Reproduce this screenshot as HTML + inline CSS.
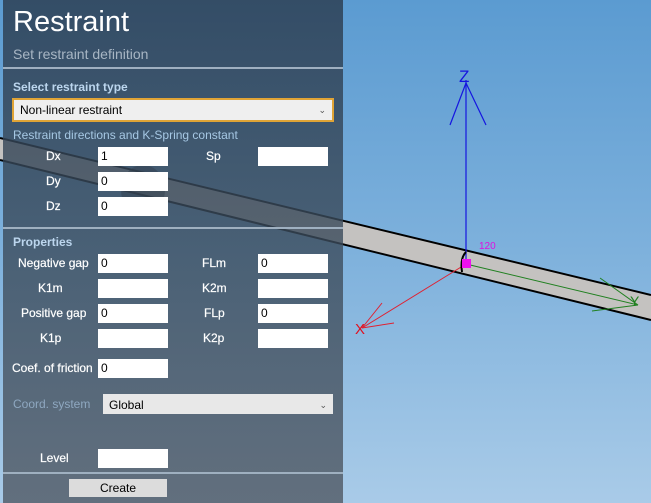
<!DOCTYPE html>
<html><head><style>
*{margin:0;padding:0;box-sizing:border-box}
body{width:651px;height:503px;overflow:hidden;position:relative;font-family:"Liberation Sans",sans-serif;background:linear-gradient(180deg,#5b9bd1 0%,#7eb1dc 50%,#a9cbe8 100%)}
svg{position:absolute;left:0;top:0}
#panel{position:absolute;left:3px;top:0;width:340px;height:503px;background:linear-gradient(180deg,rgba(44,62,82,0.84) 0%,rgba(60,76,92,0.8) 50%,rgba(86,96,108,0.86) 100%)}
.a{position:absolute;font-size:12px;color:#fff;-webkit-text-stroke:0.2px #fff}
.in{position:absolute;width:70px;height:19px;background:#fff;font-size:12px;color:#000;padding:2px 3px;line-height:15px}
.sep{position:absolute;left:0;width:340px;height:2px;background:#9fb0c0}
.sel{position:absolute;background:#efefef;font-size:12px;color:#000;padding-left:6px}
.sel span{position:absolute;right:6px;top:0;font-size:9px;color:#555}
</style></head><body>
<svg width="651" height="503">
<polygon points="0,138 651,295 651,320 0,160" fill="#c4c2c0" stroke="none"/>
<line x1="0" y1="138" x2="651" y2="295" stroke="#000" stroke-width="2"/>
<line x1="0" y1="160" x2="651" y2="320" stroke="#000" stroke-width="2"/>
<ellipse cx="143" cy="190" rx="22" ry="25" fill="#1a1a1a" opacity="0.5"/>
<line x1="466" y1="80" x2="466" y2="262" stroke="#1515e0" stroke-width="1.2"/>
<line x1="466" y1="83" x2="450" y2="125" stroke="#1515e0" stroke-width="1.2"/>
<line x1="466" y1="83" x2="486" y2="125" stroke="#1515e0" stroke-width="1.2"/>
<text x="459" y="82" font-family="Liberation Sans" font-size="17" fill="#1515e0">Z</text>
<line x1="466" y1="264" x2="362" y2="328" stroke="#e02030" stroke-width="1"/>
<line x1="362" y1="328" x2="382" y2="303" stroke="#e02030"/>
<line x1="362" y1="328" x2="394" y2="323" stroke="#e02030"/>
<text x="355" y="334" font-family="Liberation Sans" font-size="15" fill="#e01020">X</text>
<line x1="466" y1="264" x2="638" y2="305" stroke="#208020" stroke-width="1"/>
<line x1="638" y1="305" x2="600" y2="278" stroke="#208020"/>
<line x1="638" y1="305" x2="592" y2="311" stroke="#208020"/>
<text x="630" y="306" font-family="Liberation Sans" font-size="14" fill="#208020">Y</text>
<path d="M466 252 Q460 258 462 272" stroke="#000" stroke-width="2" fill="none"/>
<rect x="462" y="259" width="9" height="9" fill="#ee10ee"/>
<text x="479" y="249" font-family="Liberation Sans" font-size="10" fill="#e010e0">120</text>
</svg>
<div id="panel">
<div class="a" style="left:10px;top:6px;font-size:29px;-webkit-text-stroke:0">Restraint</div>
<div class="a" style="left:10px;top:46px;font-size:14px;color:#a8b6c4;-webkit-text-stroke:0">Set restraint definition</div>
<div class="sep" style="top:67px"></div>
<div class="a" style="left:10px;top:80px;font-weight:bold;color:#bcd6ee;-webkit-text-stroke:0">Select restraint type</div>
<div class="sel" style="left:9px;top:98px;width:322px;height:24px;border:2px solid #e0a436;line-height:20px">Non-linear restraint<span>&#8964;</span></div>
<div class="a" style="left:10px;top:128px;color:#a6c8e4;-webkit-text-stroke:0">Restraint directions and K-Spring constant</div>
<div class="a" style="left:43px;top:149px">Dx</div><div class="in" style="left:95px;top:147px">1</div>
<div class="a" style="left:203px;top:149px">Sp</div><div class="in" style="left:255px;top:147px"></div>
<div class="a" style="left:43px;top:174px">Dy</div><div class="in" style="left:95px;top:172px">0</div>
<div class="a" style="left:43px;top:199px">Dz</div><div class="in" style="left:95px;top:197px">0</div>
<div class="sep" style="top:227px"></div>
<div class="a" style="left:10px;top:235px;font-weight:bold;color:#bcd6ee;-webkit-text-stroke:0">Properties</div>
<div class="a" style="left:15px;top:256px">Negative gap</div><div class="in" style="left:95px;top:254px">0</div>
<div class="a" style="left:199px;top:256px">FLm</div><div class="in" style="left:255px;top:254px">0</div>
<div class="a" style="left:35px;top:281px">K1m</div><div class="in" style="left:95px;top:279px"></div>
<div class="a" style="left:199px;top:281px">K2m</div><div class="in" style="left:255px;top:279px"></div>
<div class="a" style="left:18px;top:306px">Positive gap</div><div class="in" style="left:95px;top:304px">0</div>
<div class="a" style="left:201px;top:306px">FLp</div><div class="in" style="left:255px;top:304px">0</div>
<div class="a" style="left:37px;top:331px">K1p</div><div class="in" style="left:95px;top:329px"></div>
<div class="a" style="left:200px;top:331px">K2p</div><div class="in" style="left:255px;top:329px"></div>
<div class="a" style="left:9px;top:361px">Coef. of friction</div><div class="in" style="left:95px;top:359px">0</div>
<div class="a" style="left:10px;top:397px;color:#8ea8c0;-webkit-text-stroke:0">Coord. system</div>
<div class="sel" style="left:100px;top:394px;width:230px;height:20px;line-height:22px;background:#e8e8e8">Global<span>&#8964;</span></div>
<div class="a" style="left:37px;top:451px">Level</div><div class="in" style="left:95px;top:449px"></div>
<div class="sep" style="top:472px"></div>
<div style="position:absolute;left:66px;top:479px;width:98px;height:18px;background:#dcdcdc;font-size:12px;text-align:center;line-height:19px">Create</div>
</div>
</body></html>
